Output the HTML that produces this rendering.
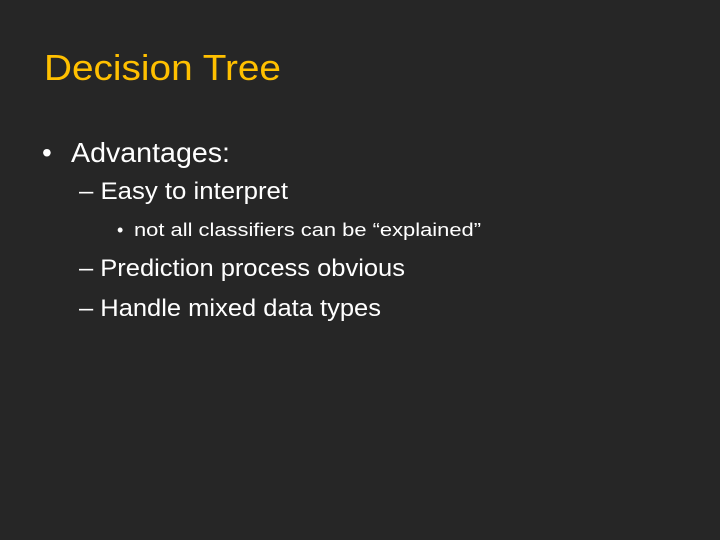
<!DOCTYPE html>
<html><head><style>
html,body{margin:0;padding:0;background:#262626;}
svg{display:block;}
text{font-family:"Liberation Sans",sans-serif;}
</style></head><body>
<svg width="720" height="540" xmlns="http://www.w3.org/2000/svg">
<rect width="720" height="540" fill="#262626"/>
<text x="44" y="80" font-size="36" fill="#FFC000" textLength="237" lengthAdjust="spacingAndGlyphs">Decision Tree</text>
<text x="42" y="162" font-size="28" fill="#fff">•</text>
<text x="71" y="162" font-size="28" fill="#fff" textLength="159" lengthAdjust="spacingAndGlyphs">Advantages:</text>
<text x="79" y="199" font-size="24" fill="#fff" textLength="209" lengthAdjust="spacingAndGlyphs">– Easy to interpret</text>
<text x="117" y="236" font-size="18" fill="#fff">•</text>
<text x="134" y="236" font-size="18" fill="#fff" textLength="347" lengthAdjust="spacingAndGlyphs">not all classifiers can be “explained”</text>
<text x="79" y="276" font-size="24" fill="#fff" textLength="326" lengthAdjust="spacingAndGlyphs">– Prediction process obvious</text>
<text x="79" y="316" font-size="24" fill="#fff" textLength="302" lengthAdjust="spacingAndGlyphs">– Handle mixed data types</text>
</svg>
</body></html>
